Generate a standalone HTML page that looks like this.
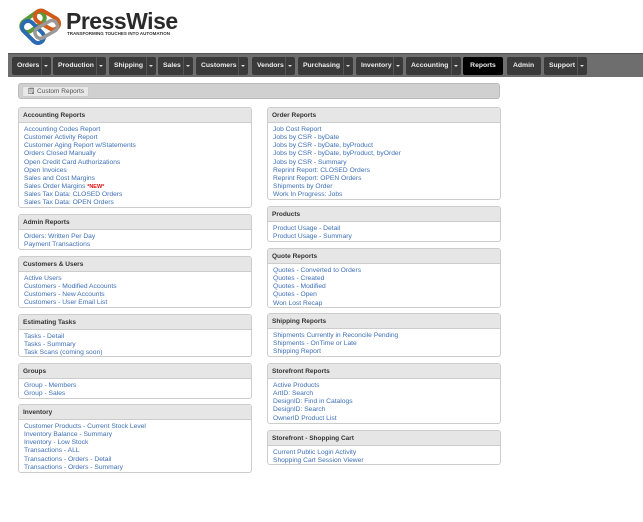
<!DOCTYPE html>
<html><head><meta charset="utf-8"><style>
*{margin:0;padding:0;box-sizing:border-box}
body{width:643px;height:522px;background:#fff;font-family:"Liberation Sans",Arial,sans-serif;position:relative;overflow:hidden}
.nav{position:absolute;left:8px;top:53px;width:635px;height:24px;background:#6e6e6e;border-top:1px solid #555}
.b{position:absolute;top:3px;height:18px;background:#3a3a3a;border-radius:2px;color:#eee;font-size:6.8px;font-weight:bold;line-height:18px;padding-left:5px;white-space:nowrap}
.b.dd::after{content:"";position:absolute;right:0;top:0;width:9px;height:18px;border-left:1px solid #555}
.b.dd i{position:absolute;right:3px;top:8px;border-left:2px solid transparent;border-right:2px solid transparent;border-top:2px solid #ddd}
.b.act{background:#000;text-align:center;padding:0}
.crumb{position:absolute;left:18px;top:83px;width:482px;height:16px;background:#d0d0d0;border:1px solid #bbb;border-radius:3px}
.crumb span{position:absolute;left:3px;top:2px;height:11px;padding:0 4px;background:#e8e8e8;border:1px solid #ccc;border-radius:2px;font-size:6.5px;color:#555;line-height:10px}
.p{position:absolute;border:1px solid #ccc;border-radius:3px;background:#fff;overflow:hidden}
.p h3{height:15px;background:#e6e6e6;border-bottom:1px solid #ccc;font-size:6.5px;color:#333;font-weight:bold;line-height:15px;padding-left:4px}
.p ul{list-style:none;padding:3px 0 0 5px}
.p li{font-size:6.7px;line-height:8.15px;color:#3d6fb6;white-space:nowrap}
.new{color:#e01010;font-weight:bold;font-size:5.5px}
</style></head><body>
<svg style="position:absolute;left:16px;top:4px" width="48" height="42" viewBox="0 0 48 42">
<rect x="4" y="12" width="26" height="12" rx="6" fill="none" stroke="#5a9a3a" stroke-width="4" transform="rotate(-35 17 18)"/>
<rect x="18" y="10" width="26" height="12" rx="6" fill="none" stroke="#d05a1a" stroke-width="4" transform="rotate(30 31 16)"/>
<rect x="4" y="22" width="26" height="12" rx="6" fill="none" stroke="#2a6ab0" stroke-width="4" transform="rotate(45 17 28)"/>
<rect x="18" y="20" width="24" height="11" rx="5" fill="none" stroke="#999" stroke-width="3.5" transform="rotate(-30 30 25)"/>
</svg>
<div style="position:absolute;left:66px;top:9px;font-size:23px;font-weight:bold;color:#2a2a2a;letter-spacing:-0.5px;line-height:24px">PressWise</div>
<div style="position:absolute;left:67px;top:31px;font-size:4.5px;font-weight:bold;color:#333;white-space:nowrap">TRANSFORMING TOUCHES INTO AUTOMATION</div>
<div class="nav">
<div class="b dd" style="left:4px;width:39px">Orders<i></i></div>
<div class="b dd" style="left:45px;width:53px">Production<i></i></div>
<div class="b dd" style="left:101px;width:47px">Shipping<i></i></div>
<div class="b dd" style="left:150px;width:35px">Sales<i></i></div>
<div class="b dd" style="left:188px;width:52px">Customers<i></i></div>
<div class="b dd" style="left:244px;width:43px">Vendors<i></i></div>
<div class="b dd" style="left:290px;width:55px">Purchasing<i></i></div>
<div class="b dd" style="left:348px;width:47px">Inventory<i></i></div>
<div class="b dd" style="left:398px;width:55px">Accounting<i></i></div>
<div class="b act" style="left:455px;width:40px">Reports</div>
<div class="b" style="left:499px;width:34px;padding-left:6px">Admin</div>
<div class="b dd" style="left:536px;width:43px">Support<i></i></div>
</div>
<div class="crumb"><span>🗒 Custom Reports</span></div>

<div class="p" style="left:18px;top:107px;width:234px;height:101px"><h3>Accounting Reports</h3><ul>
<li>Accounting Codes Report</li><li>Customer Activity Report</li><li>Customer Aging Report w/Statements</li><li>Orders Closed Manually</li><li>Open Credit Card Authorizations</li><li>Open Invoices</li><li>Sales and Cost Margins</li><li>Sales Order Margins <span class="new">*NEW*</span></li><li>Sales Tax Data: CLOSED Orders</li><li>Sales Tax Data: OPEN Orders</li></ul></div>
<div class="p" style="left:18px;top:214px;width:234px;height:36px"><h3>Admin Reports</h3><ul><li>Orders: Written Per Day</li><li>Payment Transactions</li></ul></div>
<div class="p" style="left:18px;top:256px;width:234px;height:52px"><h3>Customers &amp; Users</h3><ul><li>Active Users</li><li>Customers - Modified Accounts</li><li>Customers - New Accounts</li><li>Customers - User Email List</li></ul></div>
<div class="p" style="left:18px;top:314px;width:234px;height:43px"><h3>Estimating Tasks</h3><ul><li>Tasks - Detail</li><li>Tasks - Summary</li><li>Task Scans (coming soon)</li></ul></div>
<div class="p" style="left:18px;top:363px;width:234px;height:36px"><h3>Groups</h3><ul><li>Group - Members</li><li>Group - Sales</li></ul></div>
<div class="p" style="left:18px;top:404px;width:234px;height:69px"><h3>Inventory</h3><ul><li>Customer Products - Current Stock Level</li><li>Inventory Balance - Summary</li><li>Inventory - Low Stock</li><li>Transactions - ALL</li><li>Transactions - Orders - Detail</li><li>Transactions - Orders - Summary</li></ul></div>

<div class="p" style="left:267px;top:107px;width:234px;height:93px"><h3>Order Reports</h3><ul>
<li>Job Cost Report</li><li>Jobs by CSR - byDate</li><li>Jobs by CSR - byDate, byProduct</li><li>Jobs by CSR - byDate, byProduct, byOrder</li><li>Jobs by CSR - Summary</li><li>Reprint Report: CLOSED Orders</li><li>Reprint Report: OPEN Orders</li><li>Shipments by Order</li><li>Work In Progress: Jobs</li></ul></div>
<div class="p" style="left:267px;top:206px;width:234px;height:36px"><h3>Products</h3><ul><li>Product Usage - Detail</li><li>Product Usage - Summary</li></ul></div>
<div class="p" style="left:267px;top:248px;width:234px;height:60px"><h3>Quote Reports</h3><ul><li>Quotes - Converted to Orders</li><li>Quotes - Created</li><li>Quotes - Modified</li><li>Quotes - Open</li><li>Won Lost Recap</li></ul></div>
<div class="p" style="left:267px;top:313px;width:234px;height:44px"><h3>Shipping Reports</h3><ul><li>Shipments Currently in Reconcile Pending</li><li>Shipments - OnTime or Late</li><li>Shipping Report</li></ul></div>
<div class="p" style="left:267px;top:363px;width:234px;height:61px"><h3>Storefront Reports</h3><ul><li>Active Products</li><li>ArtID: Search</li><li>DesignID: Find in Catalogs</li><li>DesignID: Search</li><li>OwnerID Product List</li></ul></div>
<div class="p" style="left:267px;top:430px;width:234px;height:35px"><h3>Storefront - Shopping Cart</h3><ul><li>Current Public Login Activity</li><li>Shopping Cart Session Viewer</li></ul></div>
</body></html>
